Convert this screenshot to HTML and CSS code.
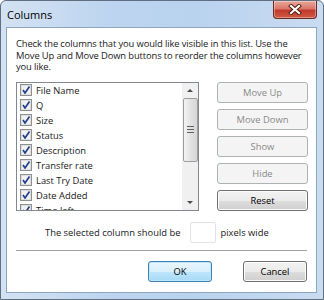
FILE: index.html
```html
<!DOCTYPE html>
<html lang="en">
<head>
  <meta charset="utf-8" />
  <title>Columns</title>
  <link rel="stylesheet" href="styles.css">
</head>
<body>
  <div class="window">
    <div class="titlebar">
      <span class="title">Columns</span>
      <button class="close" aria-label="Close">
        <svg width="14" height="11" viewBox="0 0 14 11">
          <path d="M3 2 L11 9 M11 2 L3 9" stroke="#4d1a12" stroke-width="4" stroke-linecap="square"/>
          <path d="M3 2 L11 9 M11 2 L3 9" stroke="#fff" stroke-width="2.2" stroke-linecap="square"/>
        </svg>
      </button>
    </div>
    <div class="client">
      <p class="intro">Check the columns that you would like visible in this list. Use the<br>Move Up and Move Down buttons to reorder the columns however<br>you like.</p>

      <div class="columns">
        <div class="listbox">
          <ul class="items">
            <li><span class="check"></span>File Name</li>
            <li><span class="check"></span>Q</li>
            <li><span class="check"></span>Size</li>
            <li><span class="check"></span>Status</li>
            <li><span class="check"></span>Description</li>
            <li><span class="check"></span>Transfer rate</li>
            <li><span class="check"></span>Last Try Date</li>
            <li><span class="check"></span>Date Added</li>
            <li><span class="check"></span>Time left</li>
          </ul>
          <div class="scrollbar">
            <div class="arrow up"></div>
            <div class="thumb"><span class="grip"></span></div>
            <div class="track"></div>
            <div class="arrow down"></div>
          </div>
        </div>
        <div class="actions">
          <button class="btn" disabled>Move Up</button>
          <button class="btn" disabled>Move Down</button>
          <button class="btn" disabled>Show</button>
          <button class="btn" disabled>Hide</button>
          <button class="btn">Reset</button>
        </div>
      </div>

      <div class="width-row">
        <span>The selected column should be</span>
        <span class="field"></span>
        <span>pixels wide</span>
      </div>

      <hr class="sep" />

      <div class="footer">
        <button class="btn default">OK</button>
        <button class="btn">Cancel</button>
      </div>
    </div>
  </div>
</body>
</html>
```

FILE: styles.css
```css
* {
  box-sizing: border-box;
}

body {
  margin: 0;
  width: 324px;
  height: 300px;
  background: #fff;
  font-family: "Open Sans", "Noto Sans", sans-serif;
  font-size: 9.4px;
  color: #1a1a1a;
}

.window {
  width: 324px;
  height: 300px;
  border: 1px solid #5f6f80;
  border-radius: 6px 6px 0 0;
  background: linear-gradient(90deg, #d3e2f3 0%, #bcd4ef 35%, #b9d2ee 60%, #c9dcf1 100%);
  padding: 0 6px 6px 5px;
  display: flex;
  flex-direction: column;
}

.titlebar {
  height: 26px;
  display: flex;
  align-items: flex-start;
  justify-content: space-between;
}

.title {
  font-size: 11px;
  color: #000;
  padding: 6px 0 0 1px;
}

.close {
  width: 44px;
  height: 18px;
  margin: 0;
  border: 1px solid #6b2b22;
  border-top: 0;
  border-radius: 0 0 4px 4px;
  background: linear-gradient(#e8a89a 0%, #d8786a 45%, #c23a2b 55%, #cf5a45 100%);
  box-shadow: inset 0 0 0 1px rgba(255, 255, 255, 0.35);
  display: flex;
  align-items: center;
  justify-content: center;
  padding: 0;
}

.client {
  flex: 1;
  background: #fff;
  border: 1px solid #8ea5c0;
  padding: 10px 0 0 9px;
  display: flex;
  flex-direction: column;
}

.intro {
  margin: 0;
  line-height: 11.5px;
  letter-spacing: -0.12px;
  white-space: nowrap;
}

.columns {
  display: flex;
  gap: 18px;
  margin-top: 9px;
}

.listbox {
  width: 183px;
  height: 129px;
  border: 1px solid #828790;
  display: flex;
  overflow: hidden;
}

.items {
  list-style: none;
  margin: 0;
  padding: 0 0 0 3px;
  flex: 1;
}

.items li {
  height: 15px;
  display: flex;
  align-items: center;
  gap: 4px;
  white-space: nowrap;
}

.check {
  width: 12px;
  height: 12px;
  border: 1px solid #8e8f8f;
  background: #f1f1f1 url("data:image/svg+xml,%3Csvg xmlns='http://www.w3.org/2000/svg' width='10' height='10'%3E%3Cpath d='M2 5 L4 8 L8.5 1.5' fill='none' stroke='%23213f8a' stroke-width='1.7'/%3E%3C/svg%3E") center no-repeat;
  box-shadow: inset 0 0 0 1px #dedede;
  flex: none;
}

.scrollbar {
  width: 16px;
  background: #f0f0f0;
  display: flex;
  flex-direction: column;
  align-items: center;
}

.arrow {
  height: 15px;
  width: 100%;
  display: flex;
  align-items: center;
  justify-content: center;
}

.arrow::after {
  content: "";
  border-left: 3px solid transparent;
  border-right: 3px solid transparent;
}

.arrow.up::after {
  border-bottom: 3px solid #4a4a4a;
}

.arrow.down::after {
  border-top: 3px solid #4a4a4a;
}

.thumb {
  width: 15px;
  height: 64px;
  border: 1px solid #9d9d9d;
  border-radius: 2px;
  background: linear-gradient(90deg, #f3f3f3, #e2e2e2 50%, #d6d6d6);
  display: flex;
  align-items: center;
  justify-content: center;
}

.grip {
  width: 7px;
  height: 7px;
  background: repeating-linear-gradient(#606060 0 1px, transparent 1px 3px);
}

.track {
  flex: 1;
}

.actions {
  display: flex;
  flex-direction: column;
  gap: 6px;
}

.btn {
  width: 91px;
  height: 21px;
  border: 1px solid #707070;
  border-radius: 3px;
  background: linear-gradient(#f2f2f2 0%, #ebebeb 50%, #dddddd 51%, #cfcfcf 100%);
  box-shadow: inset 0 0 0 1px #fcfcfc;
  font-family: "Open Sans", "Noto Sans", sans-serif;
  font-size: 9.4px;
  color: #000;
  padding: 0;
}

.btn:disabled {
  border-color: #adb2b5;
  background: #f4f4f4;
  box-shadow: none;
  color: #8a8a8a;
}

.width-row {
  display: flex;
  align-items: center;
  margin: 11px 0 0 29px;
}

.field {
  width: 26px;
  height: 21px;
  border: 1px solid #e2e3ea;
  border-radius: 2px;
  margin: 0 5px 0 9px;
}

.sep {
  margin: 7px 0 0 0;
  border: 0;
  border-top: 1px solid #a0a0a0;
  width: 291px;
}

.footer {
  display: flex;
  justify-content: flex-end;
  gap: 31px;
  width: 291px;
  margin-top: 10px;
}

.footer .btn {
  width: 64px;
}

.btn.default {
  border-color: #3c7fb1;
  background: linear-gradient(#eaf6fd 0%, #d9f0fc 50%, #bee6fd 51%, #a7d9f5 100%);
  box-shadow: inset 0 0 0 1px #bfe6fa;
}
```
